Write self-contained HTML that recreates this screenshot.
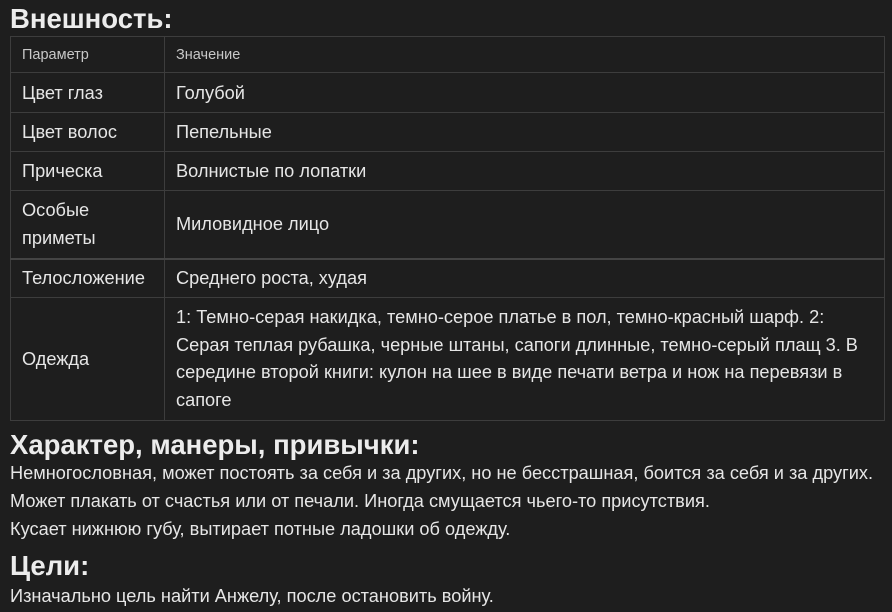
<!DOCTYPE html>
<html><head><meta charset="utf-8"><style>
html,body{margin:0;padding:0;background:#1e1e1e;width:892px;height:612px;overflow:hidden}
body{font-family:"Liberation Sans",sans-serif;color:#e6e6e6;position:relative}
h2{position:absolute;left:10px;margin:0;font-size:27.5px;font-weight:bold;color:#ececec;white-space:nowrap}
table{position:absolute;left:10px;top:36px;width:875px;border-collapse:collapse;font-size:18.2px}
td{border:1px solid #3d3d3d;padding:0 11px;vertical-align:middle;line-height:26px}
td:first-child{width:131px}
.hd td{font-size:14.5px;color:#c8c8c8}
p{position:absolute;left:10px;margin:0;font-size:18.2px;white-space:nowrap}
</style></head><body>
<h2 style="top:3px">Внешность:</h2>
<table>
<tr class="hd" style="height:36px"><td>Параметр</td><td>Значение</td></tr>
<tr style="height:40px"><td>Цвет глаз</td><td>Голубой</td></tr>
<tr style="height:39px"><td>Цвет волос</td><td>Пепельные</td></tr>
<tr style="height:39px"><td>Прическа</td><td>Волнистые по лопатки</td></tr>
<tr style="height:68px"><td style="line-height:28px">Особые<br>приметы</td><td>Миловидное лицо</td></tr>
<tr style="height:39px;border-top:2px solid #444"><td>Телосложение</td><td>Среднего роста, худая</td></tr>
<tr style="height:123px"><td>Одежда</td><td style="line-height:27.5px;padding-right:11px">1: Темно-серая накидка, темно-серое платье в пол, темно-красный шарф. 2:<br>Серая теплая рубашка, черные штаны, сапоги длинные, темно-серый плащ 3. В<br>середине второй книги: кулон на шее в виде печати ветра и нож на перевязи в<br>сапоге</td></tr>
</table>
<h2 style="top:429px">Характер, манеры, привычки:</h2>
<p style="top:463px">Немногословная, может постоять за себя и за других, но не бесстрашная, боится за себя и за других.</p>
<p style="top:491px">Может плакать от счастья или от печали. Иногда смущается чьего-то присутствия.</p>
<p style="top:519px">Кусает нижнюю губу, вытирает потные ладошки об одежду.</p>
<h2 style="top:550px">Цели:</h2>
<p style="top:586px">Изначально цель найти Анжелу, после остановить войну.</p>
</body></html>
